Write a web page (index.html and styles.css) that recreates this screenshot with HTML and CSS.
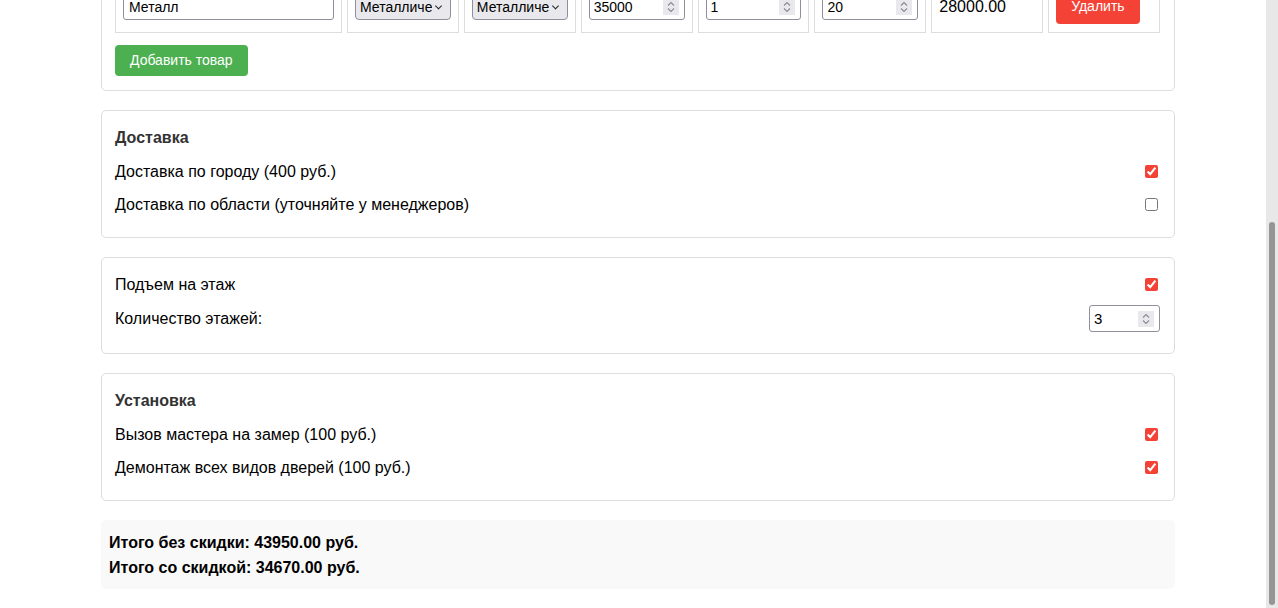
FILE: index.html
```html
<!DOCTYPE html>
<html lang="ru">
<head>
  <meta charset="UTF-8">
  <title>Калькулятор стоимости</title>
  <link rel="stylesheet" href="styles.css">
</head>
<body>

<div class="page" id="page">
<div class="container">

  <h1>Калькулятор стоимости</h1>

  <div class="section">
    <div class="section-title">Покупатель</div>
    <div class="option">
      <span>Имя:</span>
      <input type="text" class="option-input field" value="Иван">
    </div>
    <div class="option">
      <span>Телефон:</span>
      <input type="text" class="option-input field" value="+7 900 000-00-00">
    </div>
  </div>

  <div class="section">
    <div class="items">
      <div class="cell head">Название</div>
      <div class="cell head">Материал</div>
      <div class="cell head">Покрытие</div>
      <div class="cell head">Цена</div>
      <div class="cell head">Кол-во</div>
      <div class="cell head">Скидка, %</div>
      <div class="cell head">Сумма</div>
      <div class="cell head">Действие</div>

      <div class="cell"><input type="text" value="Дерево"></div>
      <div class="cell">
        <div class="select">
          <select>
            <option>Деревянная</option>
            <option>Металлическая</option>
          </select>
        </div>
      </div>
      <div class="cell">
        <div class="select">
          <select>
            <option>Шпон</option>
            <option>Металлическое</option>
          </select>
        </div>
      </div>
      <div class="cell"><div class="num"><input type="number" value="7600"><span class="spin"></span></div></div>
      <div class="cell"><div class="num"><input type="number" value="1"><span class="spin"></span></div></div>
      <div class="cell"><div class="num"><input type="number" value="30"><span class="spin"></span></div></div>
      <div class="cell">5320.00</div>
      <div class="cell"><button class="btn btn-del">Удалить</button></div>

      <div class="cell"><input type="text" value="Металл"></div>
      <div class="cell">
        <div class="select">
          <select>
            <option>Металлическая</option>
            <option>Деревянная</option>
          </select>
        </div>
      </div>
      <div class="cell">
        <div class="select">
          <select>
            <option>Металлическое</option>
            <option>Шпон</option>
          </select>
        </div>
      </div>
      <div class="cell"><div class="num"><input type="number" value="35000"><span class="spin"></span></div></div>
      <div class="cell"><div class="num"><input type="number" value="1"><span class="spin"></span></div></div>
      <div class="cell"><div class="num"><input type="number" value="20"><span class="spin"></span></div></div>
      <div class="cell">28000.00</div>
      <div class="cell"><button class="btn btn-del">Удалить</button></div>
    </div>
    <button class="btn btn-add">Добавить товар</button>
  </div>

  <div class="section">
    <div class="section-title">Доставка</div>
    <label class="option">
      <span>Доставка по городу (400 руб.)</span>
      <input type="checkbox" checked>
    </label>
    <label class="option">
      <span>Доставка по области (уточняйте у менеджеров)</span>
      <input type="checkbox">
    </label>
  </div>

  <div class="section">
    <label class="option">
      <span>Подъем на этаж</span>
      <input type="checkbox" checked>
    </label>
    <div class="option">
      <span>Количество этажей:</span>
      <div class="num floors"><input type="number" value="3"><span class="spin"></span></div>
    </div>
  </div>

  <div class="section">
    <div class="section-title">Установка</div>
    <label class="option">
      <span>Вызов мастера на замер (100 руб.)</span>
      <input type="checkbox" checked>
    </label>
    <label class="option">
      <span>Демонтаж всех видов дверей (100 руб.)</span>
      <input type="checkbox" checked>
    </label>
  </div>

  <div class="totals">
    <div>Итого без скидки: 43950.00 руб.</div>
    <div>Итого со скидкой: 34670.00 руб.</div>
  </div>

</div>
</div>

<div class="scrollbar"><div class="scroll-thumb" id="thumb"></div></div>

<script>
  var page = document.getElementById('page');
  var thumb = document.getElementById('thumb');

  // spinner arrows for number fields
  document.querySelectorAll('.spin').forEach(function (el) {
    el.innerHTML = '<svg width="16" height="16" viewBox="0 0 16 16">' +
      '<path d="M5 6.5 L8 3.5 L11 6.5 M5 9.5 L8 12.5 L11 9.5" fill="none" stroke="#8a8a95" stroke-width="1.1"/></svg>';
  });

  function updateThumb() {
    var h = page.clientHeight;
    var s = page.scrollHeight;
    thumb.style.top = (page.scrollTop / s * h + 3) + 'px';
    thumb.style.height = (h / s * h - 6) + 'px';
  }

  page.addEventListener('scroll', updateThumb);
  page.scrollTop = page.scrollHeight;
  updateThumb();
</script>

</body>
</html>
```

FILE: styles.css
```css
html, body {
  margin: 0;
  height: 100%;
  overflow: hidden;
}
body {
  font-family: "Liberation Sans", Arial, sans-serif;
  font-size: 16px;
  color: #000;
  background-color: #fff;
}
.page {
  height: 100vh;
  overflow-y: auto;
  padding: 0 12px 0 10px;
  box-sizing: border-box;
  scrollbar-width: none;
}
.page::-webkit-scrollbar {
  display: none;
}
.scrollbar {
  position: fixed;
  top: 0;
  right: 0;
  bottom: 0;
  width: 12px;
  background-color: #e8e8e8;
}
.scroll-thumb {
  position: absolute;
  left: 3px;
  width: 6px;
  border-radius: 3px;
  background-color: #959595;
}
.container {
  max-width: 1074px;
  margin: 0 auto;
  padding: 14px 0 19px;
}
h1 {
  font-size: 24px;
  line-height: 28px;
  color: #333;
  margin: 0 0 10px;
}
.section {
  background-color: white;
  border: 1px solid #ddd;
  border-radius: 5px;
  padding: 17px 14px 9px 13px;
  margin-bottom: 19px;
}
.section-title {
  font-weight: bold;
  color: #333;
  line-height: 20px;
  margin-bottom: 14px;
}
.option {
  display: flex;
  justify-content: space-between;
  align-items: center;
  margin-bottom: 14px;
}
.option input[type="checkbox"] {
  width: 13px;
  height: 13px;
  margin: 3px 2px 3px 4px;
  accent-color: #f44336;
}
.option-input {
  height: 27px;
  margin: -2px 0;
  padding: 0 4px;
  border: 1px solid #8f8f9d;
  border-radius: 3px;
  font-family: inherit;
  font-size: 15px;
  box-sizing: border-box;
}
.field {
  width: 250px;
}

/* number field with always visible spinner */
.num {
  display: flex;
  align-items: center;
  width: 100%;
  height: 27px;
  padding-right: 5px;
  border: 1px solid #8f8f9d;
  border-radius: 3px;
  background-color: white;
  box-sizing: border-box;
}
.num input {
  flex: 1;
  min-width: 0;
  height: 100%;
  border: none;
  outline: none;
  padding: 0 4px;
  background: transparent;
  font-family: inherit;
  font-size: 14px;
  -moz-appearance: textfield;
}
.num input::-webkit-inner-spin-button,
.num input::-webkit-outer-spin-button {
  -webkit-appearance: none;
  margin: 0;
}
.spin {
  display: flex;
  width: 16px;
  height: 16px;
  background-color: #e9e9ed;
}
.num.floors {
  width: 71px;
  margin: -3px 0 -2px;
}
.num.floors input {
  font-size: 15px;
}

.items {
  display: grid;
  grid-template-columns: 227px repeat(7, 1fr);
  gap: 5px;
  margin-bottom: 12px;
}
.cell {
  border: 1px solid #ddd;
  padding: 8px 7px;
  display: flex;
  align-items: center;
  min-width: 0;
}
.cell.head {
  font-size: 14px;
  font-weight: bold;
  color: #333;
}
.cell > input {
  width: 100%;
  height: 27px;
  padding: 0 5px;
  border: 1px solid #8f8f9d;
  border-radius: 3px;
  box-sizing: border-box;
  font-family: inherit;
  font-size: 14px;
}
.select {
  position: relative;
  width: 100%;
}
.select select {
  appearance: none;
  -webkit-appearance: none;
  width: 100%;
  height: 27px;
  padding: 0 18px 0 4px;
  border: 1px solid #8f8f9d;
  border-radius: 4px;
  background-color: #e9e9ed;
  color: #000;
  font-family: inherit;
  font-size: 14px;
}
.select::after {
  content: "";
  position: absolute;
  right: 10px;
  top: 50%;
  width: 4px;
  height: 4px;
  border-right: 1.5px solid #222;
  border-bottom: 1.5px solid #222;
  transform: translateY(-70%) rotate(45deg);
  pointer-events: none;
}
.btn {
  border: none;
  border-radius: 4px;
  color: white;
  font-family: inherit;
  font-size: 14px;
  line-height: 15px;
  padding: 8px 15px;
  cursor: pointer;
}
.btn-add {
  background-color: #4caf50;
  margin-bottom: 5px;
}
.btn-add:hover {
  background-color: #43a047;
}
.btn-del {
  background-color: #f44336;
  padding: 10px 15px;
}
.btn-del:hover {
  background-color: #e53935;
}
.totals {
  background-color: #f9f9f9;
  border-radius: 5px;
  padding: 10px 8px 9px;
  font-weight: bold;
  line-height: 25px;
}
```
